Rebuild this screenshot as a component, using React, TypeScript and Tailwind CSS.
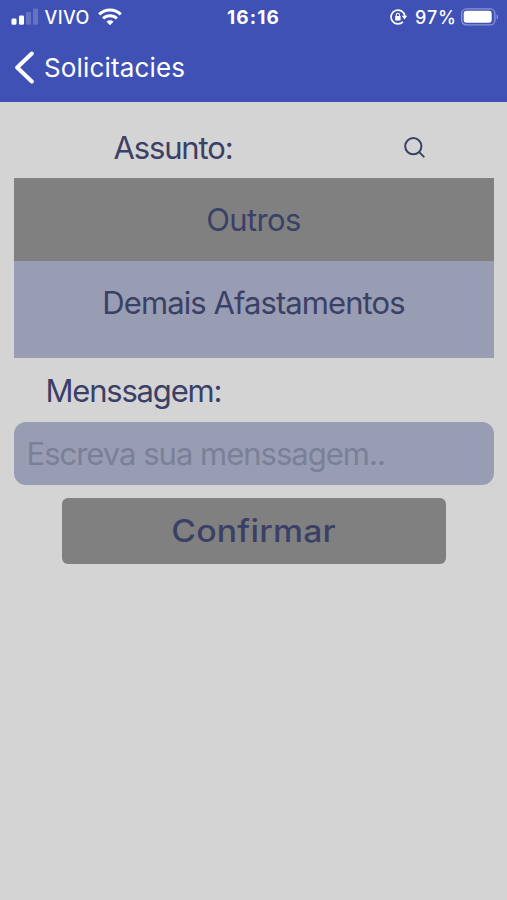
import type { ReactNode } from "react";

function SignalBars() {
  return (
    <svg width="28" height="18" viewBox="0 0 28 18" fill="#fff">
      <rect x="0.5" y="10.5" width="5" height="6.2" rx="1.3" />
      <rect x="8" y="7.5" width="5" height="9.2" rx="1.3" />
      <rect x="15" y="4" width="5" height="12.7" rx="1.3" opacity="0.2" />
      <rect x="22" y="0.5" width="5" height="16.2" rx="1.3" opacity="0.2" />
    </svg>
  );
}

function WifiIcon() {
  return (
    <svg width="24" height="18" viewBox="0 0 24 18" fill="none" stroke="#fff" strokeWidth="3">
      <path d="M1.2 6.4a15.3 15.3 0 0 1 21.6 0" />
      <path d="M5.1 10.5a9.8 9.8 0 0 1 13.8 0" />
      <path d="M12 17.3 8.5 13.8a5 5 0 0 1 7 0Z" fill="#fff" stroke="none" />
    </svg>
  );
}

function RotationLock() {
  return (
    <svg width="18" height="16" viewBox="0 0 18 16" fill="none" stroke="#fff">
      <path d="M12.9 12.8A6.9 6.9 0 1 1 14.8 7" strokeWidth="1.7" />
      <path d="M11.8 6.8h5.4l-2.7 3.6Z" fill="#fff" stroke="none" />
      <rect x="5.2" y="7" width="5.4" height="4.4" rx="0.6" fill="#fff" stroke="none" />
      <path d="M6.3 7.2V5.9a1.6 1.6 0 0 1 3.2 0v1.3" strokeWidth="1.1" />
    </svg>
  );
}

function Battery() {
  return (
    <svg width="38" height="18" viewBox="0 0 38 18" fill="none">
      <rect x="0.7" y="0.8" width="33.2" height="16" rx="4.6" stroke="#fff" strokeOpacity="0.4" strokeWidth="1.3" />
      <rect x="2.7" y="2.8" width="28" height="12" rx="2.8" fill="#fff" />
      <path d="M35.6 6.2c2 .8 2 4.4 0 5.2Z" fill="#fff" fillOpacity="0.4" />
    </svg>
  );
}

function StatusBar() {
  return (
    <div className="flex h-[34px] items-center text-[18px] leading-none text-white">
      <div className="flex w-[227px] items-center pl-[10.5px]">
        <SignalBars />
        <span className="ml-[6px] w-[53px] pt-px font-medium tracking-[0.4px]">VIVO</span>
        <WifiIcon />
      </div>
      <span className="w-[163px] pt-px text-[19px] font-bold tracking-[1.1px]">16:16</span>
      <RotationLock />
      <span className="ml-[7px] w-[46px] pt-px font-medium tracking-[0.9px]">97%</span>
      <Battery />
    </div>
  );
}

function Header() {
  return (
    <header className="h-[102px] bg-[#3f51b5]">
      <StatusBar />
      <div className="flex h-[67px] items-center pl-[14px] text-white">
        <svg width="21" height="33" viewBox="0 0 21 33" fill="none" stroke="#fff" strokeWidth="4" strokeLinecap="round" strokeLinejoin="round">
          <path d="M17.8 2.5 3.2 16.5l14.6 14" />
        </svg>
        <h1 className="ml-[9px] text-[26px] leading-none tracking-[0.15px]">Solicitacies</h1>
      </div>
    </header>
  );
}

function Option({ className, children }: { className: string; children: ReactNode }) {
  return <li className={`flex justify-center text-[31px] leading-[40px] ${className}`}>{children}</li>;
}

export default function App() {
  return (
    <div className="h-[900px] w-[507px] overflow-hidden bg-[#d4d4d4] font-['Inter',sans-serif] text-[#3b4066]">
      <Header />
      <main className="px-[13.5px]">
        <div className="flex h-[76px] items-center justify-between pt-[14px] pr-[69px] pl-[100px]">
          <h2 className="text-[31px] leading-none tracking-[-1.15px]">Assunto:</h2>
          <svg width="21" height="21" viewBox="0 0 21 21" fill="none" stroke="currentColor" strokeWidth="2" strokeLinecap="round">
            <circle cx="9.3" cy="9.2" r="8.1" />
            <path d="m15.2 15.1 4.5 4.5" />
          </svg>
        </div>
        <ul>
          <Option className="h-[82.5px] bg-[#808080] pt-[22px] tracking-[-0.6px]">Outros</Option>
          <Option className="h-[97.5px] bg-[#989db3] pt-[22px] tracking-[-0.92px]">Demais Afastamentos</Option>
        </ul>
        <label htmlFor="message" className="block h-[64px] pt-[13px] pl-[32px] text-[31px] leading-[40px] tracking-[-1.2px]">
          Menssagem:
        </label>
        <input
          id="message"
          placeholder="Escreva sua menssagem.."
          className="block h-[63px] w-full rounded-[12px] bg-[#989db3] px-[13px] text-[31px] tracking-[-1px] placeholder:text-[#7b8098]"
        />
        <button className="mx-auto mt-[13px] block h-[66px] w-[384px] rounded-[6px] bg-[#808080] text-[31px] font-medium tracking-[0.2px]">
          <span className="inline-block scale-x-[1.09]">Confirmar</span>
        </button>
      </main>
    </div>
  );
}
